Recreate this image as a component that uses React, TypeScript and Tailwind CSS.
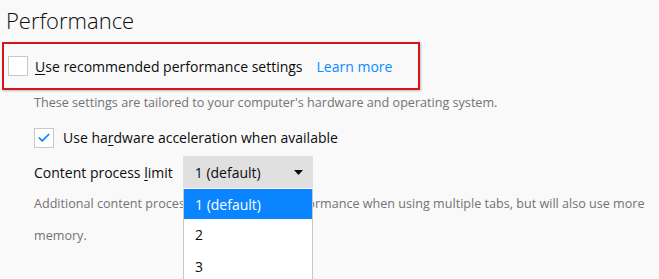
import { Check } from "lucide-react";

const font = { fontFamily: '"Open Sans", "Noto Sans", sans-serif' };

export default function App() {
  return (
    <div className="relative h-[279px] w-[659px] overflow-hidden bg-[#f9f9fa] text-[#0c0c0d]" style={font}>
      <h1 className="pl-[6px] pt-[5px] text-[22px] font-light leading-[30px] text-[#0c0c0d]">Performance</h1>

      <div className="ml-[2px] mt-[7px] flex h-[48px] w-[418px] items-center border-2 border-[#d7141a] pl-[4px] shadow-[1px_1px_2px_rgba(0,0,0,0.25)]">
        <span className="h-[20px] w-[20px] border border-[#c8c8c8] bg-white" />
        <span className="ml-[7px] text-[14px]">
          <span className="underline underline-offset-2">U</span>se recommended performance settings
        </span>
        <span className="ml-[14px] text-[14px] text-[#0a8dff]">Learn more</span>
      </div>

      <p className="ml-[34px] mt-[4px] text-[12.6px] leading-[18px] text-[#737373]">
        These settings are tailored to your computer's hardware and operating system.
      </p>

      <div className="ml-[34px] mt-[15px] flex items-center">
        <span className="flex h-[20px] w-[20px] items-center justify-center border border-[#c8c8c8] bg-white">
          <Check className="h-[14px] w-[14px] text-[#0a84ff]" strokeWidth={3} />
        </span>
        <span className="ml-[9px] text-[14px]">
          Use ha<span className="underline underline-offset-2">r</span>dware acceleration when available
        </span>
      </div>

      <div className="ml-[34px] mt-[8px] flex items-center">
        <span className="text-[14px]">
          Content process <span className="underline underline-offset-2">l</span>imit
        </span>
        <div className="ml-[10px] flex h-[32px] w-[130px] items-center justify-between rounded-t-[2px] bg-[#e0e0e1] pl-[12px] pr-[10px] text-[14px]">
          <span>1 (default)</span>
          <svg width="9" height="5" viewBox="0 0 9 5">
            <path d="M0 0h9L4.5 5z" fill="#0c0c0d" />
          </svg>
        </div>
      </div>

      <p className="ml-[34px] w-[620px] text-[12.6px] leading-[32px] text-[#737373]">
        Additional content processes can improve performance when using multiple tabs, but will also use more memory.
      </p>

      <div className="absolute left-[183px] top-[189px] w-[130px] border-x border-b border-[#c8c8c8] bg-white text-[14px]">
        <div className="flex h-[30px] items-center bg-[#0a84ff] pl-[11px] text-white">1 (default)</div>
        <div className="flex h-[31px] items-center pl-[11px]">2</div>
        <div className="flex h-[32px] items-center pl-[11px]">3</div>
      </div>
    </div>
  );
}
